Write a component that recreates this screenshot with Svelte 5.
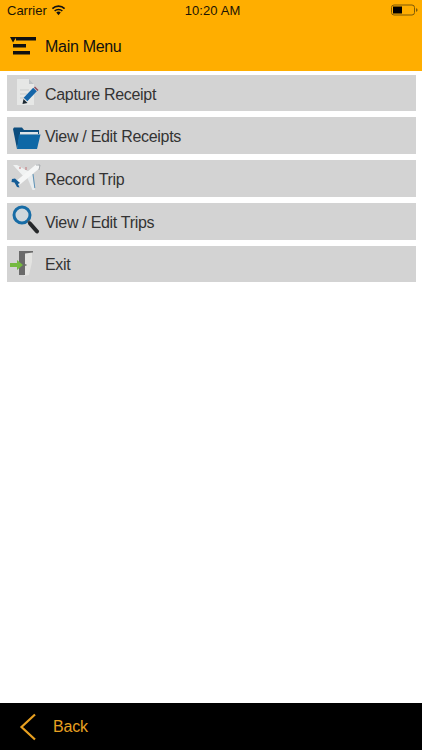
<script>
	const items = [
		{ label: 'Capture Receipt', icon: 'capture' },
		{ label: 'View / Edit Receipts', icon: 'folder' },
		{ label: 'Record Trip', icon: 'plane' },
		{ label: 'View / Edit Trips', icon: 'search' },
		{ label: 'Exit', icon: 'exit' }
	];
</script>

<div class="screen">
	<header class="top">
		<div class="status">
			<span class="carrier">Carrier</span>
			<svg class="wifi" width="15" height="12" viewBox="0 0 16 12">
				<path d="M8 11.5 5.6 8.700a3.400 3.400 0 0 1 4.800 0z" fill="#111" />
				<path d="M3.900 7.100a5.900 5.900 0 0 1 8.200 0" fill="none" stroke="#111" stroke-width="1.700" />
				<path d="M1.500 4.500a9.400 9.400 0 0 1 13 0" fill="none" stroke="#111" stroke-width="1.700" />
			</svg>
			<span class="time">10:20 AM</span>
			<svg class="battery" width="27" height="12" viewBox="0 0 27 12">
				<rect x="0.500" y="1" width="23" height="10" rx="2.500" fill="none" stroke="#7d5a08" />
				<rect x="2" y="2.500" width="9" height="7" fill="#000" />
				<path d="M25 4.200c1 .2 1.500.8 1.500 1.800s-.5 1.600-1.500 1.800z" fill="#7d5a08" />
			</svg>
		</div>
		<div class="title">
			<svg class="menu-icon" width="27" height="18" viewBox="0 0 27 18">
				<path d="M0 0h6.500L3 5.500z" fill="#111" />
				<rect x="6" y="0" width="20" height="3.500" fill="#111" />
				<rect x="3" y="7" width="13" height="3.500" fill="#111" />
				<rect x="3" y="14" width="17" height="3.500" fill="#111" />
			</svg>
			<span class="title-text">Main Menu</span>
		</div>
	</header>

	<main class="menu">
		{#each items as item}
			<button type="button" class="row">
				<span class="icon">
					<svg width="38" height="36" viewBox="0 0 38 36">
						{#if item.icon === 'capture'}
							<path d="M10 4h12l5 5v21H10z" fill="#e6e7e6" />
							<path d="M22 4v5h5z" fill="#bfc3c6" />
							<path d="M13 15h9M13 19h7M13 23h5" stroke="#c9cbcb" stroke-width="1" />
							<path d="M18.500 24.500 28 14.500" stroke="#1565a8" stroke-width="5" />
							<path d="M27 12.500l3.500 3.500 1-1-3.500-3.500z" fill="#8c4a5a" />
							<path d="M15.500 29l1-5 4 4z" fill="#1a2630" />
						{:else if item.icon === 'folder'}
							<path d="M6 11l1-1.500h8l2 2.500h15v4H13l-3 15z" fill="#0c4d7e" />
							<path d="M13 14h18v2H13z" fill="#dfe4e8" />
							<path d="M12 16.500h21.500L30 31H10z" fill="#0f68a6" />
						{:else if item.icon === 'plane'}
							<path d="M6 5h4l14 8-6 5z" fill="#f0f2f2" />
							<path d="M20 17l5-4 3 17h-2.500z" fill="#e8ecee" />
							<path d="M26 14l1.800 14" stroke="#5d93b8" stroke-width="1" />
							<path d="M30 7 12 22" stroke="#f5f6f6" stroke-width="5" stroke-linecap="round" />
							<path d="M5 19l3-.5 5 4.500-2 1 1.500 3.500-2.500-.5-2.500-4.500L4.500 22z" fill="#155c96" />
							<path d="M29 5h4M33 5l-1 5" stroke="#a9adb0" stroke-width="1" fill="none" />
							<path d="M13 7v2M19 7v3" stroke="#c4767a" stroke-width="1" />
						{:else if item.icon === 'search'}
							<circle cx="15" cy="12" r="8" fill="#cfd7dc" stroke="#176ca6" stroke-width="3" />
							<path d="M21 18l2 2" stroke="#555" stroke-width="2.500" />
							<path d="M23 20.500l7 8" stroke="#26282a" stroke-width="4" stroke-linecap="round" />
						{:else}
							<path d="M17 7l8-1v10l-3 13-5 1z" fill="#e3e3e1" />
							<path d="M12 5h14v1.500l-8 1V29h-6z" fill="#6a6a6a" />
							<circle cx="18.800" cy="19" r="0.800" fill="#444" />
							<path d="M3 17h7v-3l6 5-6 5v-3H3z" fill="#74ba3e" />
						{/if}
					</svg>
				</span>
				<span class="label">{item.label}</span>
			</button>
		{/each}
	</main>

	<footer class="bottom">
		<svg width="18" height="28" viewBox="0 0 18 28">
			<path d="M16 1.500 2.500 14 16 26.500" fill="none" stroke="#e8a020" stroke-width="2.200" />
		</svg>
		<span>Back</span>
	</footer>
</div>

<style>
	:global(body) {
		margin: 0;
		background: #fff;
	}
	.screen {
		width: 422px;
		height: 750px;
		display: flex;
		flex-direction: column;
		font-family: 'Liberation Sans', Arial, sans-serif;
	}
	.top {
		height: 71px;
		background: #ffae00;
		display: flex;
		flex-direction: column;
		flex: none;
	}
	.status {
		height: 21px;
		padding: 0 4px 0 7px;
		display: flex;
		align-items: center;
		position: relative;
		font-size: 13px;
		color: #1a1405;
	}
	.wifi {
		margin-left: 4px;
		margin-top: -2px;
	}
	.time {
		position: absolute;
		left: 3px;
		right: 0;
		text-align: center;
		font-size: 13px;
		letter-spacing: 0.100px;
	}
	.battery {
		margin-left: auto;
		margin-top: -1px;
	}
	.title {
		flex: 1;
		display: flex;
		align-items: center;
		padding-left: 10px;
		gap: 8px;
		font-size: 16px;
		letter-spacing: -0.300px;
		color: #111;
	}
	.title-text {
		padding-top: 2px;
	}
	.menu {
		flex: 1;
		padding: 3.750px 6px 0 6.500px;
		display: flex;
		flex-direction: column;
		gap: 6px;
	}
	.row {
		height: 36.700px;
		background: #d3d3d3;
		border: 0;
		padding: 0;
		display: flex;
		align-items: center;
		font: inherit;
		text-align: left;
	}
	.icon {
		width: 38.500px;
		display: flex;
		flex: none;
	}
	.label {
		font-size: 16px;
		letter-spacing: -0.300px;
		color: #333;
		padding-top: 3px;
	}
	.bottom {
		height: 47px;
		flex: none;
		background: #000;
		display: flex;
		align-items: center;
		padding-left: 19px;
		gap: 16px;
		color: #e8a020;
		font-size: 16px;
		letter-spacing: -0.200px;
	}
</style>
